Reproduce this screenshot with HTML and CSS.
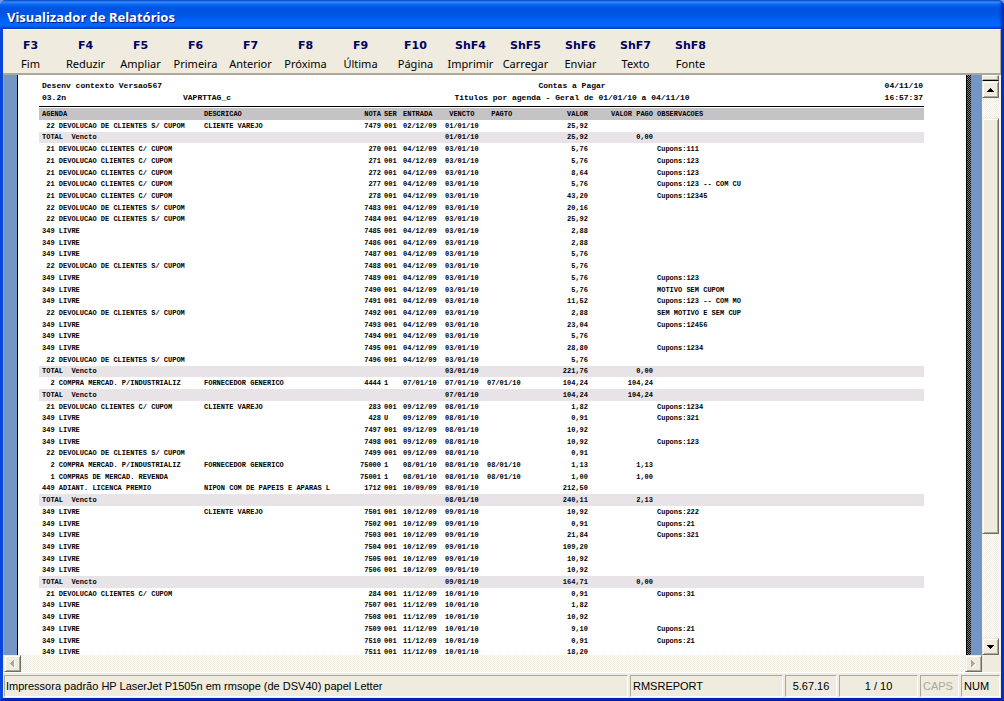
FILE: index.html
```html
<!DOCTYPE html>
<html lang="pt-BR">
<head>
<meta charset="utf-8">
<title>Visualizador de Relatórios</title>
<link rel="stylesheet" href="styles.css">
</head>
<body>
<div class="window">
  <header class="titlebar"><h1>Visualizador de Relatórios</h1></header>
  <div class="client">
    <nav class="toolbar">
      <button><b>F3</b><span>Fim</span></button>
      <button><b>F4</b><span>Reduzir</span></button>
      <button><b>F5</b><span>Ampliar</span></button>
      <button><b>F6</b><span>Primeira</span></button>
      <button><b>F7</b><span>Anterior</span></button>
      <button><b>F8</b><span>Próxima</span></button>
      <button><b>F9</b><span>Última</span></button>
      <button><b>F10</b><span>Página</span></button>
      <button><b>ShF4</b><span>Imprimir</span></button>
      <button><b>ShF5</b><span>Carregar</span></button>
      <button><b>ShF6</b><span>Enviar</span></button>
      <button><b>ShF7</b><span>Texto</span></button>
      <button><b>ShF8</b><span>Fonte</span></button>
    </nav>
    <main class="workspace">
      <div class="view">
        <article class="page">
          <div class="heading">
            <span class="program">Desenv contexto Versao567</span><span class="center">Contas a Pagar</span><span class="right">04/11/10</span>
            <span>03.2n</span><span>VAPRTTAG_c</span><span class="center">Titulos por agenda - Geral de 01/01/10 a 04/11/10</span><span class="right">16:57:37</span>
          </div>
          <table class="report">
            <colgroup><col class="c-agenda"><col class="c-desc"><col class="c-nota"><col class="c-ser"><col class="c-date"><col class="c-date"><col class="c-pagto"><col class="c-valor"><col class="c-pago"><col></colgroup>
            <thead><tr><th>AGENDA</th><th>DESCRICAO</th><th>NOTA</th><th>SER</th><th>ENTRADA</th><th> VENCTO</th><th> PAGTO</th><th>VALOR</th><th>VALOR PAGO</th><th>OBSERVACOES</th></tr></thead>
            <tbody id="rows"></tbody>
          </table>
        </article>
        <div class="shadow"></div>
      </div>
      <div class="vscroll">
        <div class="split"></div>
        <button class="arrow" aria-label="Rolar para cima"><svg width="7" height="4" viewBox="0 0 7 4" shape-rendering="crispEdges"><path d="M3 0h1v1h1v1h1v1h1v1H0V3h1V2h1V1h1z"/></svg></button>
        <div class="track"><div class="thumb"></div></div>
        <button class="arrow" aria-label="Rolar para baixo"><svg width="7" height="4" viewBox="0 0 7 4" shape-rendering="crispEdges"><path d="M0 0h7v1H6v1H5v1H4v1H3V3H2V2H1V1H0z"/></svg></button>
      </div>
    </main>
    <div class="hscroll">
      <button class="arrow" disabled aria-label="Rolar para a esquerda"><svg width="5" height="8" viewBox="0 0 5 8" shape-rendering="crispEdges"><path fill="#fff" d="M4 1h1v7H4z"/><path fill="#aca899" d="M3 0h1v7H3V6H2V5H1V4H0V3h1V2h1V1h1z"/></svg></button>
      <div class="track"></div>
      <button class="arrow" disabled aria-label="Rolar para a direita"><svg width="5" height="8" viewBox="0 0 5 8" shape-rendering="crispEdges"><path fill="#fff" d="M1 7h1V6h1V5h1V4h1v1H4v1H3v1H2v1H1z"/><path fill="#aca899" d="M0 0h1v1h1v1h1v1h1v1H3v1H2v1H1v1H0z"/></svg></button>
      <div class="corner"></div>
    </div>
    <footer class="status">
      <span class="printer">Impressora padrão HP LaserJet P1505n em rmsope (de DSV40) papel Letter</span>
      <span class="report-name">RMSREPORT</span>
      <span class="version">5.67.16</span>
      <span class="pages">1 / 10</span>
      <span class="key off">CAPS</span>
      <span class="key">NUM</span>
    </footer>
  </div>
</div>
<script src="report.js"></script>
</body>
</html>
```
FILE: styles.css
```css
* { box-sizing: border-box; }
body { margin: 0; background: #7b9ae0; font-family: "Liberation Sans", Arial, sans-serif; color: #000; }
button { padding: 0; border: 0; background: none; font: inherit; color: inherit; }

.window { height: 100vh; display: flex; flex-direction: column; background: #0845dc; border-radius: 6px 6px 0 0; overflow: hidden; }
.titlebar {
  flex: none; height: 29px; padding: 0 7px; display: flex; align-items: center;
  background: linear-gradient(#0a57d8 0, #3a93ff 2px, #0b6af4 4px, #0054e3 8px, #0055e5 15px, #0066ff 22px, #0066ff 26px, #0040c8 29px);
  box-shadow: inset -3px 0 3px #0030b0;
}
.titlebar h1 { margin: 0; padding-top: 4px; font: bold 13px/18px "Noto Sans", sans-serif; color: #fff; text-shadow: 1px 1px 0 #0a1883; }
.client {
  flex: 1; min-height: 0; display: flex; flex-direction: column;
  border: solid; border-width: 0 3px 3px; border-color: #0845dc #0030c0 #0022b8 #0845dc;
  background: #efebde;
}

.toolbar {
  flex: none; display: flex; height: 46px; padding: 7px 0 0;
  border-top: 1px solid #fff; border-bottom: 2px solid #aca899; border-right: 1px solid #aca899;
}
.toolbar button { width: 55px; display: flex; flex-direction: column; align-items: center; }
.toolbar b { font: bold 11px/18px "DejaVu Sans", Verdana, sans-serif; color: #000063; }
.toolbar span { font: 11px/18px "Noto Sans", Tahoma, sans-serif; }

.workspace { flex: 1; min-height: 0; display: flex; border-right: 2px solid #f7f5ee; }
.view { flex: 1; min-width: 0; display: flex; overflow: hidden; padding: 0 11px 0 13px; background: #7396c6; border-left: 1px solid #aca899; }
.page {
  flex: 1; min-width: 0; padding: 5px 42px 0 21px; overflow: hidden;
  background: #fff; border-left: 1px solid #000;
}
.shadow { flex: none; width: 5px; border-left: 1px solid #000; background: repeating-conic-gradient(#000 0 25%, #848284 0 50%) 0 0 / 2px 2px; }
.heading {
  display: grid; grid-template-columns: 141px 127px 1fr 89px;
  padding: 0 1px 2px 3px; border-bottom: 1px solid #000; margin-bottom: 1px;
  font: bold 8px/12px "Liberation Mono", "Courier New", monospace;
}
.program { grid-column: span 2; }
.center { text-align: center; }
.right { text-align: right; }

.report {
  width: 100%; table-layout: fixed; border-collapse: collapse;
  font: bold 7px/11px "Liberation Mono", "Courier New", monospace;
}
.c-agenda { width: 165px; }
.c-desc { width: 154px; }
.c-nota { width: 23px; }
.c-ser { width: 22px; }
.c-date { width: 42px; }
.c-pagto { width: 47px; }
.c-valor { width: 54px; }
.c-pago { width: 65px; }
.report th, .report td { padding: 0; text-align: left; vertical-align: middle; white-space: pre; }
.report tr { height: 12px; }
.report thead { background: #c6c3c6; }
.report tbody tr:nth-child(10n+2), .report tbody tr:nth-child(10n+6), .report tbody tr:nth-child(10n+9) { height: 11px; }
.report tr > :nth-child(1), .report tr > :nth-child(4) { padding-left: 3px; }
.report tr > :nth-child(10) { padding-left: 4px; }
.report tr > :nth-child(3), .report tr > :nth-child(8), .report tr > :nth-child(9) { text-align: right; direction: ltr; }
.report .total { background: #e7e3e7; }

.vscroll { width: 17px; display: flex; flex-direction: column; background: #efebde; }
.split { height: 6px; background: #efebde; border: solid; border-width: 1px 1px 1px; border-color: #fff #716f64 #000 #fff; box-shadow: inset -1px -1px #aca899; }
.arrow {
  flex: none; width: 17px; height: 17px; display: flex; align-items: center; justify-content: center;
  background: #efebde; border: 1px solid; border-color: #efebde #716f64 #716f64 #efebde;
  box-shadow: inset 1px 1px #fff, inset -1px -1px #aca899;
}
.track { flex: 1; background: repeating-conic-gradient(#fff 0 25%, #efebde 0 50%) 0 0 / 2px 2px; }
.vscroll .track { padding-top: 20px; }
.thumb {
  height: 80%; background: #efebde; border: 1px solid; border-color: #efebde #716f64 #716f64 #efebde;
  box-shadow: inset 1px 1px #fff, inset -1px -1px #aca899;
}
.hscroll { flex: none; display: flex; padding-left: 1px; }
.corner { width: 19px; }

.status { flex: none; display: flex; gap: 2px; height: 26px; padding: 2px 1px 1px; border-top: 1px solid #fff; font-size: 11px; line-height: 21px; }
.status span { border: 1px solid; border-color: #aca899 #fff #fff #aca899; white-space: nowrap; overflow: hidden; padding: 0 2px; }
.status .printer { flex: 1; padding: 0 1px; }
.report-name { width: 153px; }
.version { width: 52px; text-align: center; }
.pages { width: 79px; text-align: center; }
.key { width: 39px; }
.off { color: #aca899; }
```
FILE: report.js
```js
const LIVRE = "349 LIVRE";
const DEV1 = " 21 DEVOLUCAO CLIENTES C/ CUPOM";
const DEV2 = " 22 DEVOLUCAO DE CLIENTES S/ CUPOM";
const IND = "  2 COMPRA MERCAD. P/INDUSTRIALIZ";
const TOTAL = "TOTAL  Vencto";

// agenda | descricao | nota | ser | entrada | vencto | pagto | valor | valor pago | observacoes
const rows = [
  [DEV2, "CLIENTE VAREJO", "7479", "001", "02/12/09", "01/01/10", "", "25,92", "", ""],
  [TOTAL, "", "", "", "", "01/01/10", "", "25,92", "0,00", ""],
  [DEV1, "", "270", "001", "04/12/09", "03/01/10", "", "5,76", "", "Cupons:111"],
  [DEV1, "", "271", "001", "04/12/09", "03/01/10", "", "5,76", "", "Cupons:123"],
  [DEV1, "", "272", "001", "04/12/09", "03/01/10", "", "8,64", "", "Cupons:123"],
  [DEV1, "", "277", "001", "04/12/09", "03/01/10", "", "5,76", "", "Cupons:123 -- COM CU"],
  [DEV1, "", "278", "001", "04/12/09", "03/01/10", "", "43,20", "", "Cupons:12345"],
  [DEV2, "", "7483", "001", "04/12/09", "03/01/10", "", "20,16", "", ""],
  [DEV2, "", "7484", "001", "04/12/09", "03/01/10", "", "25,92", "", ""],
  [LIVRE, "", "7485", "001", "04/12/09", "03/01/10", "", "2,88", "", ""],
  [LIVRE, "", "7486", "001", "04/12/09", "03/01/10", "", "2,88", "", ""],
  [LIVRE, "", "7487", "001", "04/12/09", "03/01/10", "", "5,76", "", ""],
  [DEV2, "", "7488", "001", "04/12/09", "03/01/10", "", "5,76", "", ""],
  [LIVRE, "", "7489", "001", "04/12/09", "03/01/10", "", "5,76", "", "Cupons:123"],
  [LIVRE, "", "7490", "001", "04/12/09", "03/01/10", "", "5,76", "", "MOTIVO SEM CUPOM"],
  [LIVRE, "", "7491", "001", "04/12/09", "03/01/10", "", "11,52", "", "Cupons:123 -- COM MO"],
  [DEV2, "", "7492", "001", "04/12/09", "03/01/10", "", "2,88", "", "SEM MOTIVO E SEM CUP"],
  [LIVRE, "", "7493", "001", "04/12/09", "03/01/10", "", "23,04", "", "Cupons:12456"],
  [LIVRE, "", "7494", "001", "04/12/09", "03/01/10", "", "5,76", "", ""],
  [LIVRE, "", "7495", "001", "04/12/09", "03/01/10", "", "28,80", "", "Cupons:1234"],
  [DEV2, "", "7496", "001", "04/12/09", "03/01/10", "", "5,76", "", ""],
  [TOTAL, "", "", "", "", "03/01/10", "", "221,76", "0,00", ""],
  [IND, "FORNECEDOR GENERICO", "4444", "1", "07/01/10", "07/01/10", "07/01/10", "104,24", "104,24", ""],
  [TOTAL, "", "", "", "", "07/01/10", "", "104,24", "104,24", ""],
  [DEV1, "CLIENTE VAREJO", "283", "001", "09/12/09", "08/01/10", "", "1,82", "", "Cupons:1234"],
  [LIVRE, "", "428", "U", "09/12/09", "08/01/10", "", "0,91", "", "Cupons:321"],
  [LIVRE, "", "7497", "001", "09/12/09", "08/01/10", "", "10,92", "", ""],
  [LIVRE, "", "7498", "001", "09/12/09", "08/01/10", "", "10,92", "", "Cupons:123"],
  [DEV2, "", "7499", "001", "09/12/09", "08/01/10", "", "0,91", "", ""],
  [IND, "FORNECEDOR GENERICO", "75000", "1", "08/01/10", "08/01/10", "08/01/10", "1,13", "1,13", ""],
  ["  1 COMPRAS DE MERCAD. REVENDA", "", "75001", "1", "08/01/10", "08/01/10", "08/01/10", "1,00", "1,00", ""],
  ["449 ADIANT. LICENCA PREMIO", "NIPON COM DE PAPEIS E APARAS L", "1712", "001", "10/09/09", "08/01/10", "", "212,50", "", ""],
  [TOTAL, "", "", "", "", "08/01/10", "", "240,11", "2,13", ""],
  [LIVRE, "CLIENTE VAREJO", "7501", "001", "10/12/09", "09/01/10", "", "10,92", "", "Cupons:222"],
  [LIVRE, "", "7502", "001", "10/12/09", "09/01/10", "", "0,91", "", "Cupons:21"],
  [LIVRE, "", "7503", "001", "10/12/09", "09/01/10", "", "21,84", "", "Cupons:321"],
  [LIVRE, "", "7504", "001", "10/12/09", "09/01/10", "", "109,20", "", ""],
  [LIVRE, "", "7505", "001", "10/12/09", "09/01/10", "", "10,92", "", ""],
  [LIVRE, "", "7506", "001", "10/12/09", "09/01/10", "", "10,92", "", ""],
  [TOTAL, "", "", "", "", "09/01/10", "", "164,71", "0,00", ""],
  [DEV1, "", "284", "001", "11/12/09", "10/01/10", "", "0,91", "", "Cupons:31"],
  [LIVRE, "", "7507", "001", "11/12/09", "10/01/10", "", "1,82", "", ""],
  [LIVRE, "", "7508", "001", "11/12/09", "10/01/10", "", "10,92", "", ""],
  [LIVRE, "", "7509", "001", "11/12/09", "10/01/10", "", "9,10", "", "Cupons:21"],
  [LIVRE, "", "7510", "001", "11/12/09", "10/01/10", "", "0,91", "", "Cupons:21"],
  [LIVRE, "", "7511", "001", "11/12/09", "10/01/10", "", "18,20", "", ""]
];

const body = document.getElementById("rows");
for (const cells of rows) {
  const tr = body.insertRow();
  if (cells[0] === TOTAL) tr.className = "total";
  for (const text of cells) tr.insertCell().textContent = text;
}
```
